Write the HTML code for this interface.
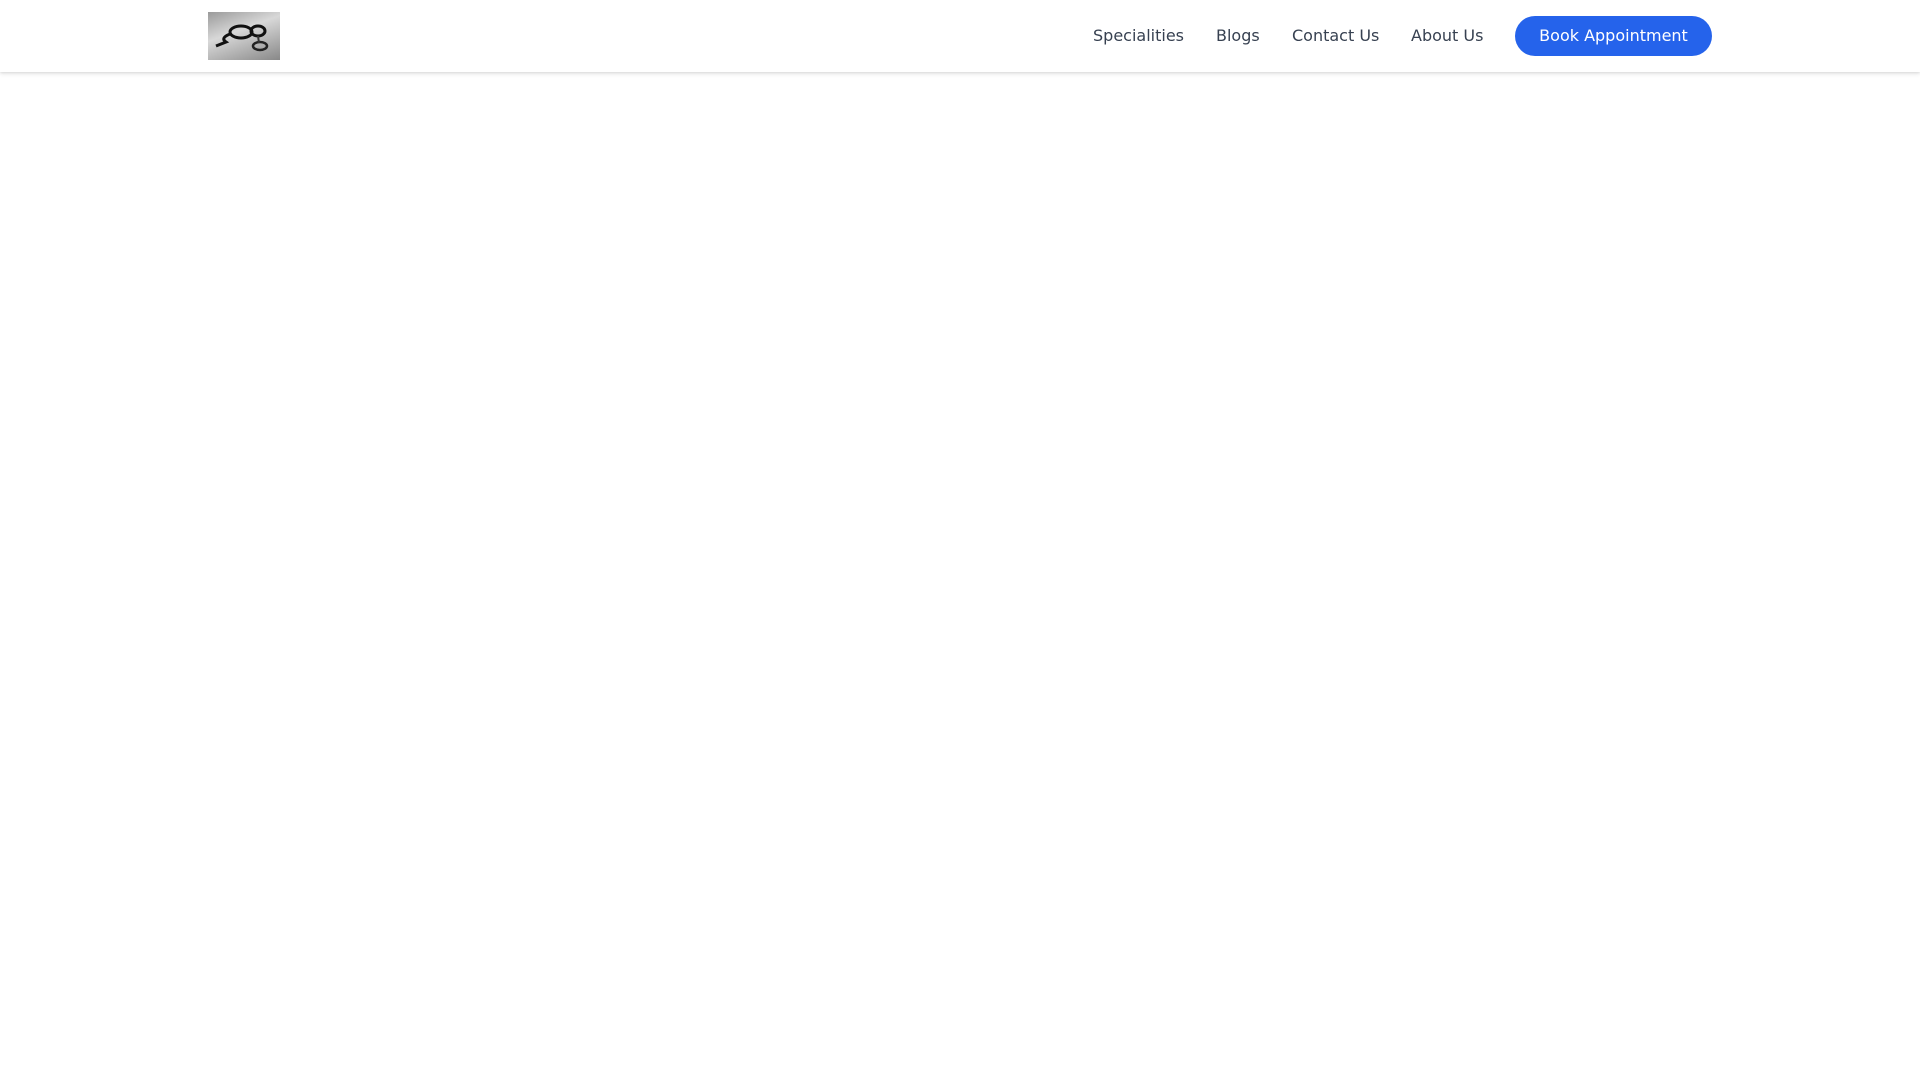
<!DOCTYPE html>
<html><head><style>
*{margin:0;padding:0;box-sizing:border-box}
body{width:1920px;height:1080px;background:#fff;font-family:"DejaVu Sans",sans-serif;overflow:hidden}
header{position:absolute;left:0;top:0;width:1920px;height:72px;background:#fff;box-shadow:0 2px 4px rgba(0,0,0,.1),0 1px 2px rgba(0,0,0,.06)}
.logo{position:absolute;left:208px;top:12px;width:72px;height:48px;background:linear-gradient(160deg,#9a9a9a,#d8d8d8 40%,#b0b0b0 70%,#888)}
nav a{position:absolute;top:25px;font-size:16px;line-height:22px;color:#374151;text-decoration:none;white-space:nowrap}
.btn{position:absolute;left:1515px;top:16px;width:197px;height:40px;border-radius:20px;background:#2563eb;color:#fff;font-size:16px;line-height:40px;text-align:center}
</style></head><body>
<header>
<div class="logo"><svg width="72" height="48" viewBox="0 0 72 48"><g fill="none" stroke="#111" stroke-width="3"><ellipse cx="33" cy="20" rx="11" ry="6"/><ellipse cx="50" cy="19" rx="7" ry="5"/><path d="M22 22 Q12 26 18 30 L8 34"/></g><ellipse cx="52" cy="34" rx="7" ry="4" fill="none" stroke="#222" stroke-width="2.5"/><path d="M50 24 L51 31" stroke="#333" stroke-width="2"/></svg></div>
<nav>
<a style="left:1093px">Specialities</a>
<a style="left:1216px">Blogs</a>
<a style="left:1292px">Contact Us</a>
<a style="left:1411px">About Us</a>
</nav>
<div class="btn">Book Appointment</div>
</header>
</body></html>
